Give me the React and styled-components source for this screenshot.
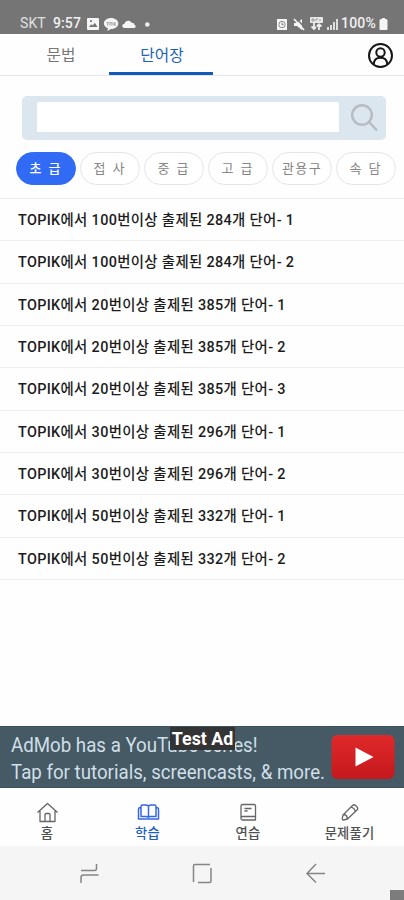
import React from "react";
import styled, { createGlobalStyle } from "styled-components";

const GlobalStyle = createGlobalStyle`
  * { box-sizing: border-box; }
  body { margin: 0; background: #fff; font-family: Roboto, "Noto Sans CJK KR", sans-serif; }
`;

const Screen = styled.div`
  width: 404px;
  height: 900px;
  display: flex;
  flex-direction: column;
  overflow: hidden;
  background: #fefefe;
`;

const StatusBar = styled.header`
  height: 34px;
  flex: none;
  display: flex;
  justify-content: space-between;
  padding: 13px 16px 0 20px;
  background: #757575;
  color: #f1f1f1;
  font-size: 14px;
  line-height: 21px;
`;

const StatusGroup = styled.div`
  display: flex;
  align-items: center;
  height: 21px;
  svg { display: block; flex: none; }
`;

const Carrier = styled.span`
  width: 33px;
  color: #e0e0e0;
  letter-spacing: 0.1px;
`;

const Clock = styled.span`
  width: 33px;
  font-weight: 500;
  letter-spacing: 0.1px;
`;

const Battery = styled.span`
  width: 37px;
  margin-left: 2px;
  margin-right: 1px;
  font-weight: 500;
  letter-spacing: 0.2px;
`;

const Header = styled.nav`
  height: 42px;
  flex: none;
  display: flex;
  padding-left: 13px;
  border-bottom: 1.5px solid #e4e5e6;
`;

const Tab = styled.button`
  width: ${(p) => (p.$active ? 104 : 96)}px;
  height: 41px;
  padding: ${(p) => (p.$active ? "3px 0 0 2px" : "3px 0 0 0")};
  border: 0;
  border-bottom: 3px solid ${(p) => (p.$active ? "#1259b8" : "transparent")};
  background: none;
  color: ${(p) => (p.$active ? "#1d63b4" : "#777")};
  font: 400 15.7px/35px "Noto Sans CJK KR", sans-serif;
`;

const Profile = styled.button`
  margin: 8px 10px 0 auto;
  padding: 0;
  width: 27px;
  height: 27px;
  border: 0;
  background: none;
  svg { display: block; }
`;

const Search = styled.div`
  flex: none;
  display: flex;
  width: 364px;
  height: 44px;
  margin: 19.5px 0 0 22px;
  padding: 6.5px 6px 7px 14.5px;
  border-radius: 5px;
  background: #dce6ef;
  svg { margin: 0 0 0 9px; display: block; }
`;

const SearchInput = styled.input`
  width: 302px;
  height: 30px;
  padding: 0 8px;
  border: 0;
  background: #fff;
  outline: none;
`;

const Chips = styled.div`
  flex: none;
  display: flex;
  gap: 4px;
  margin: 12px 0 0 16px;
`;

const Chip = styled.button`
  width: 60px;
  height: 33px;
  padding: 0 0 1px;
  border: 1px solid ${(p) => (p.$active ? "#316bf5" : "#e5e5e7")};
  border-radius: 17px;
  background: ${(p) => (p.$active ? "#316bf5" : "#fff")};
  color: ${(p) => (p.$active ? "#fff" : "#858585")};
  font: ${(p) => (p.$active ? 500 : 400)} 13px/30px "Noto Sans CJK KR", sans-serif;
  letter-spacing: ${(p) => (p.$tight ? 1.3 : 2.1)}px;
  white-space: nowrap;
`;

const WordList = styled.ul`
  flex: 1;
  margin: 13.5px 0 0;
  padding: 0;
  list-style: none;
  border-top: 1.5px solid #ececed;
`;

const WordRow = styled.li`
  height: 42.35px;
  padding: 0 18px;
  border-bottom: 1.5px solid #eeeeef;
  color: #1c1c1c;
  font-size: 14.4px;
  font-weight: 500;
  line-height: 43px;
  letter-spacing: 0.34px;
  white-space: nowrap;
`;

const Ad = styled.aside`
  flex: none;
  position: relative;
  display: flex;
  align-items: center;
  height: 62px;
  border: solid #3a5360;
  border-width: 1px 0;
  background: #455a64;
  svg { position: relative; margin-left: auto; margin-right: 9px; }
`;

const AdText = styled.p`
  width: 320px;
  margin: 3px 0 0 11px;
  color: #d0dfe8;
  font-size: 20px;
  line-height: 26.5px;
  white-space: nowrap;
  transform: scaleX(0.935);
  transform-origin: left;
`;

const AdBadge = styled.span`
  position: absolute;
  left: 170px;
  top: 0;
  width: 65px;
  height: 23px;
  background: #343434;
  color: #fff;
  font-size: 17.8px;
  font-weight: 700;
  line-height: 24px;
  text-align: center;
  white-space: nowrap;
`;

const BottomNav = styled.nav`
  flex: none;
  display: grid;
  grid-template-columns: 94px 107px 94px 109px;
  height: 58px;
`;

const NavItem = styled.button`
  display: flex;
  flex-direction: column;
  align-items: center;
  gap: 1px;
  padding: 13px 0 0;
  border: 0;
  background: none;
  color: ${(p) => (p.$active ? "#1c5fc4" : "#505050")};
  font: 500 13.3px/18px "Noto Sans CJK KR", sans-serif;
  letter-spacing: 0.2px;
  svg { display: block; }
`;

const SystemNav = styled.footer`
  flex: none;
  position: relative;
  display: flex;
  justify-content: space-between;
  align-items: flex-start;
  height: 54px;
  padding: 15px 77px 0 77px;
  background: #f5f5f5;
`;

const Corner = styled.span`
  position: absolute;
  right: 0;
  bottom: 0;
  width: 14px;
  height: 10px;
  background: #7c7c7c;
`;

const Svg = ({ w, h, children, ...rest }) => (
  <svg width={w} height={h} viewBox={`0 0 ${w} ${h}`} fill="none" {...rest}>
    {children}
  </svg>
);

const LeftStatusIcons = () => (
  <Svg w={68} h={16}>
    <path fill="#f5f5f5" fillRule="evenodd" d="M3 2h9q1 0 1 1v10q0 1-1 1H2q-1 0-1-1V3q0-1 1-1zm0 9h8.500l-2.700-4.200-2.200 2.700-1.400-1.200zM4 4.300v1.700h2V4.300z" />
    <path fill="#f5f5f5" d="M25 2c4.200 0 7.300 2.400 7.300 5.500S29.200 13 25 13l-3.800 2 .8-2.700c-2.500-.9-4.100-2.700-4.100-4.800C17.900 4.400 21 2 25 2z" />
    <path stroke="#aaa" strokeWidth="1.200" d="M20.500 6.500h2.400M21.700 6.500v3M24 9.500v-3h2v3M28 6.500v3M30 6.500l-2 1.500 2 1.500" />
    <path fill="#f5f5f5" d="M38.500 12c-3-.2-3-4 0-4.300.8-3.200 5.200-4 7-1 2.200-.2 3.100 1.300 3 2.300 1.800.3 1.500 3-.5 3z" />
    <circle cx="61.300" cy="8.500" r="2.300" fill="#eee" />
  </Svg>
);

const RightStatusIcons = () => (
  <Svg w={63} h={16}>
    <path fill="#f5f5f5" d="M1 3h10v11H1z" />
    <circle cx="6" cy="8.500" r="3.200" stroke="#8a8a8a" strokeWidth="1" />
    <path stroke="#757575" d="M6 6.700v2h1.500" />
    <path fill="#f5f5f5" d="M18 7h3l5-4v11l-5-4h-3z" />
    <path stroke="#757575" strokeWidth="1.500" d="M20 2l10 11" />
    <path stroke="#f5f5f5" strokeWidth="1.700" d="M18 3l10 11" />
    <path fill="#e9e9e9" d="M35 1h11q1 0 1 1v4q0 1-1 1H35q-1 0-1-1V2q0-1 1-1z" />
    <path stroke="#999" d="M36 3h2v2h-2zM40 5V3h2M44 3v2" />
    <path stroke="#eee" strokeWidth="1.800" d="M38 7v6M35.500 10.500L38 13l2-2M43 14V8M40.800 10.500L43 8.300l2.500 2.200" />
    <path fill="#ddd" d="M51 11h2v3h-2zM54 9h2v5h-2zM57 6h2v8h-2zM60 3h2v11h-2z" />
  </Svg>
);

const words = [
  ["100", "284", 1],
  ["100", "284", 2],
  ["20", "385", 1],
  ["20", "385", 2],
  ["20", "385", 3],
  ["30", "296", 1],
  ["30", "296", 2],
  ["50", "332", 1],
  ["50", "332", 2],
];

const levels = ["초 급", "접 사", "중 급", "고 급", "관용구", "속 담"];

export default function App() {
  return (
    <>
      <GlobalStyle />
      <Screen>
        <StatusBar>
          <StatusGroup>
            <Carrier>SKT</Carrier>
            <Clock>9:57</Clock>
            <LeftStatusIcons />
          </StatusGroup>
          <StatusGroup>
            <RightStatusIcons />
            <Battery>100%</Battery>
            <Svg w={9} h={14}>
              <path fill="#f5f5f5" d="M3 1h3v1h1q1.500 0 1.500 1.500V12q0 1-1 1h-6q-1 0-1-1V3.500Q.5 2 2 2h1z" />
            </Svg>
          </StatusGroup>
        </StatusBar>

        <Header>
          <Tab>문법</Tab>
          <Tab $active>단어장</Tab>
          <Profile aria-label="profile">
            <Svg w={27} h={27} stroke="#151515" strokeWidth="2">
              <circle cx="13.500" cy="13.500" r="11.500" />
              <circle cx="13.500" cy="10.500" r="4.200" />
              <path d="M6.800 22c.2-4 2.700-6.300 6.700-6.300s6.500 2.300 6.700 6.300" />
            </Svg>
          </Profile>
        </Header>

        <Search>
          <SearchInput aria-label="search" />
          <Svg w={32} h={32} stroke="#b8bdc2" strokeWidth="2.500">
            <circle cx="14" cy="13" r="9.800" />
            <path d="M21 20l8 8.500" />
          </Svg>
        </Search>

        <Chips>
          {levels.map((level, i) => (
            <Chip key={level} $active={i === 0} $tight={i === 4}>{level}</Chip>
          ))}
        </Chips>

        <WordList>
          {words.map(([times, count, part]) => (
            <WordRow key={`${times}-${part}`}>
              {`TOPIK에서 ${times}번이상 출제된 ${count}개 단어- ${part}`}
            </WordRow>
          ))}
        </WordList>

        <Ad>
          <AdText>
            AdMob has a YouTube series!
            <br />
            Tap for tutorials, screencasts, &amp; more.
          </AdText>
          <Svg w={64} h={46}>
            <defs>
              <linearGradient id="play" x2="0" y2="1">
                <stop stopColor="#e0292a" />
                <stop offset="1" stopColor="#c4191d" />
              </linearGradient>
            </defs>
            <rect x=".5" y="1" width="63" height="44" rx="6" fill="url(#play)" />
            <path d="M24.500 13.500l18 9.500-18 9.500z" fill="#fff" />
          </Svg>
          <AdBadge>Test Ad</AdBadge>
        </Ad>

        <BottomNav>
          <NavItem>
            <Svg w={24} h={22} stroke="#666" strokeWidth="1.300" strokeLinejoin="round">
              <path d="M5 10v10.500h5v-7q0-1 1-1h3q1 0 1 1v7h5V10M2.500 11.500L12.500 2.500l10 9M10 20.500h5" />
            </Svg>
            홈
          </NavItem>
          <NavItem $active>
            <Svg w={24} h={22} stroke="#3466e8" strokeWidth="1.500" strokeLinejoin="round">
              <path d="M12.500 5Q11.500 4 9.500 4H6.500Q5 4 5 5.500V15.500h5.500q1.500 0 2 .7.5-.7 2-.7H20V5.500Q20 4 18.500 4h-3q-2 0-3 1zM12.500 5V16M4.500 6.500Q2.500 6.500 2.500 8.500v9.500h20V8.500q0-2-2-2" />
            </Svg>
            학습
          </NavItem>
          <NavItem>
            <Svg w={24} h={22} stroke="#666" strokeWidth="1.300" strokeLinejoin="round">
              <path d="M19.500 15.500V5q0-1.500-1.500-1.500H6.500Q5 3.500 5 5V17.500q0 1.500 1.500 1.500h13v-3.500H6.500Q5 15.500 5 17M8.500 7.500h7M8.500 10h3" />
            </Svg>
            연습
          </NavItem>
          <NavItem>
            <Svg w={24} h={22} stroke="#666" strokeWidth="1.300" strokeLinejoin="round">
              <path d="M5 14L14.500 4.500q1.500-1.500 3 0l1.500 1.500q1.500 1.500 0 3L9.500 18l-4 1q-1.500 0-1.200-1.500zM5.500 13.500q3.500 0 4 4.500M13 6q3.500 1 4.500 4.500" />
            </Svg>
            문제풀기
          </NavItem>
        </BottomNav>

        <SystemNav>
          <Svg w={24} h={24} stroke="#858585" strokeWidth="1.500">
            <path d="M4 9.500h13.500q2 0 2-2V3M4 22v-5.500q0-2.500 2.500-2.500H21.500" />
          </Svg>
          <Svg w={24} h={24} stroke="#858585" strokeWidth="1.500">
            <path d="M3.500 21V5q0-1.500 1.500-1.500h15M21 7v13q0 1.500-1.500 1.500H8" />
          </Svg>
          <Svg w={24} h={24} stroke="#858585" strokeWidth="1.500">
            <path d="M22 12.500H5M13 3l-9 9.500 9 9" />
          </Svg>
          <Corner />
        </SystemNav>
      </Screen>
    </>
  );
}
